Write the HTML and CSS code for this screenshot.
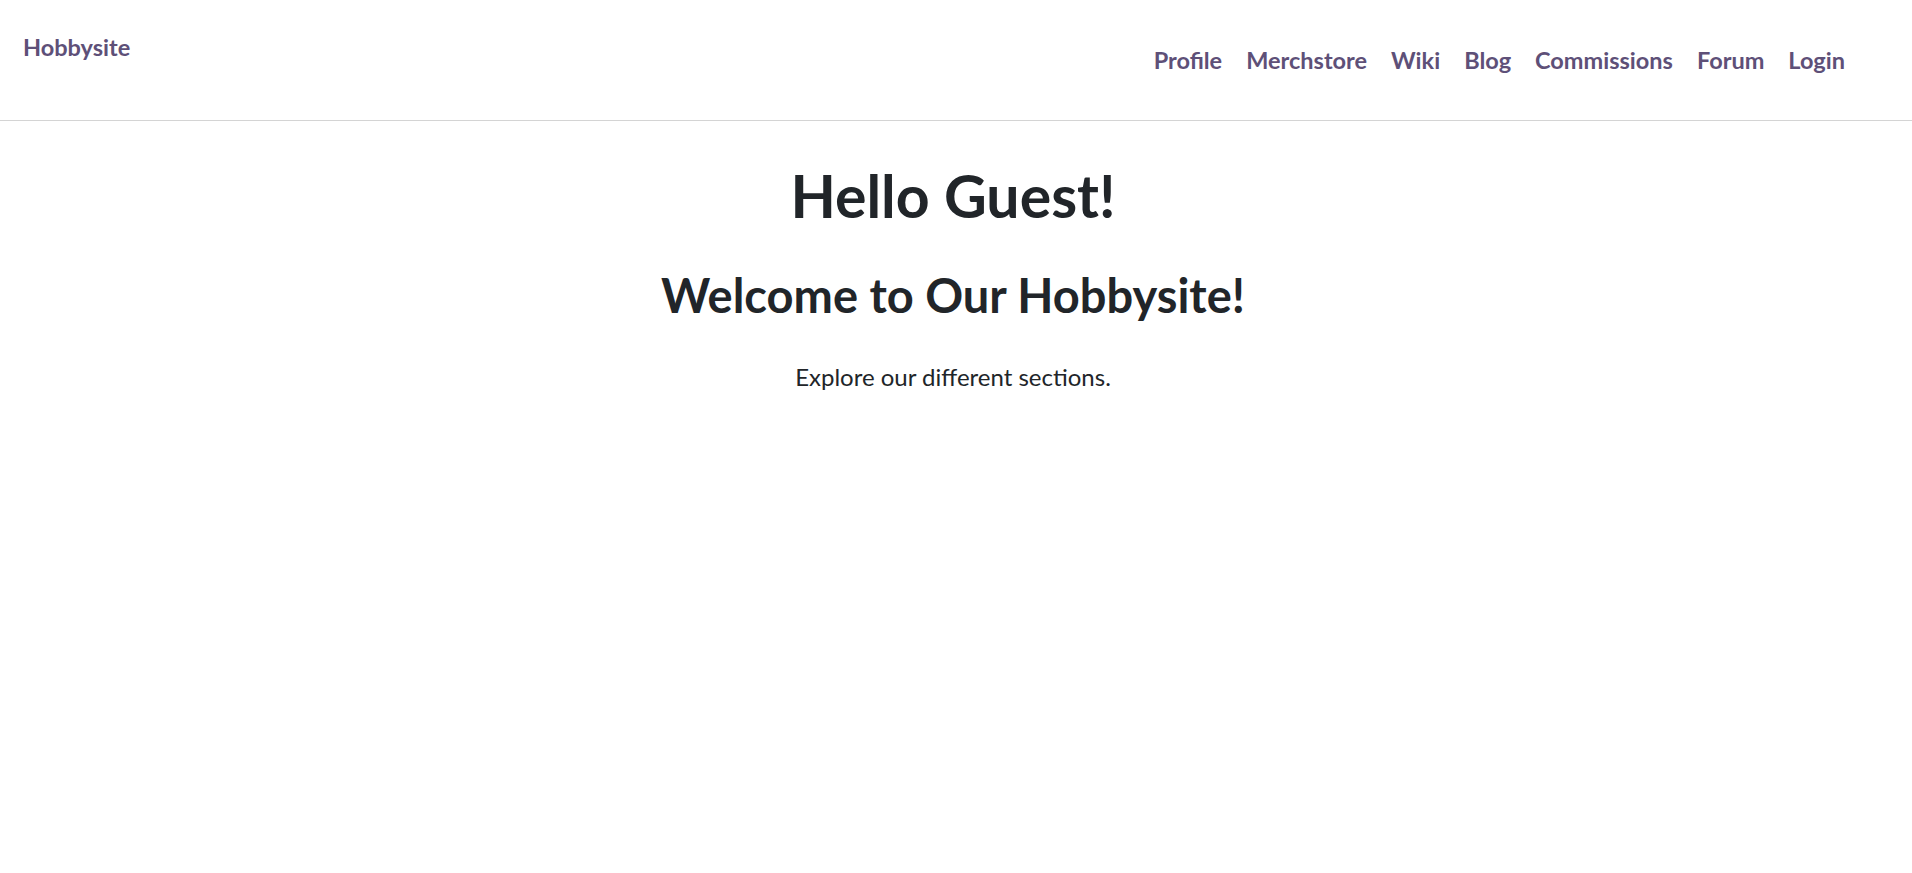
FILE: index.html
```html
<!DOCTYPE html>
<html lang="en">
<head>
<meta charset="utf-8">
<title>Hobbysite</title>
<link rel="stylesheet" href="styles.css">
</head>
<body>
<header class="site-header">
  <a class="brand" href="#">Hobbysite</a>
  <nav class="main-nav">
    <a class="nav-link" href="#">Profile</a>
    <a class="nav-link" href="#">Merchstore</a>
    <a class="nav-link" href="#">Wiki</a>
    <a class="nav-link" href="#">Blog</a>
    <a class="nav-link" href="#">Commissions</a>
    <a class="nav-link" href="#">Forum</a>
    <a class="nav-link" href="#">Login</a>
  </nav>
</header>
<main class="content">
  <h1 class="title">Hello Guest!</h1>
  <h2 class="subtitle">Welcome to Our Hobbysite!</h2>
  <p class="intro">Explore our different sections.</p>
</main>
</body>
</html>
```

FILE: styles.css
```css
* { box-sizing: border-box; }
html, body { margin: 0; padding: 0; background: #ffffff; }
body {
  font-family: "Lato", "Liberation Sans", sans-serif;
  color: #212529;
}
.site-header {
  height: 121px;
  border-bottom: 1px solid #d4d4d4;
  display: flex;
  align-items: flex-start;
  justify-content: space-between;
  padding: 0 55px 0 23px;
}
.brand {
  margin-top: 33px;
  font-size: 23.5px;
  line-height: 1.2;
  font-weight: 700;
  color: #5e5078;
  text-decoration: none;
}
.main-nav {
  margin-top: 46px;
  display: flex;
}
.nav-link {
  padding: 0 12px;
  font-size: 23.5px;
  line-height: 1.2;
  font-weight: 700;
  color: #5e5078;
  text-decoration: none;
}
.content {
  text-align: center;
  padding-right: 6px;
}
.title {
  margin: 40px 0 0;
  font-size: 59px;
  line-height: 1.2;
  font-weight: 700;
}
.subtitle {
  margin: 35px 0 0;
  font-size: 47px;
  line-height: 1.2;
  font-weight: 700;
}
.intro {
  margin: 36px 0 0;
  font-size: 24px;
  line-height: 1.5;
  font-weight: 400;
}
```
